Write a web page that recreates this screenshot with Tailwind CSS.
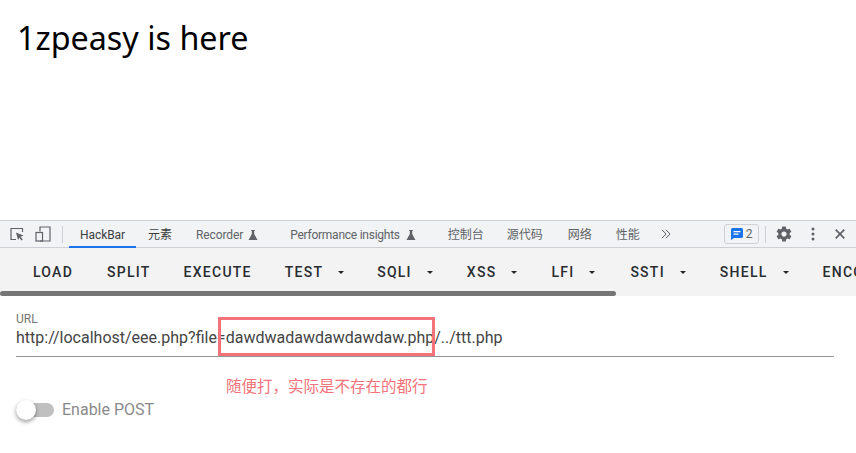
<!DOCTYPE html>
<html>
<head>
<meta charset="utf-8">
<script src="https://cdn.jsdelivr.net/npm/@tailwindcss/browser@4"></script>
</head>
<body class="w-[856px] h-[453px] overflow-hidden bg-white relative font-['Roboto','Noto_Sans_CJK_SC',sans-serif]">
<div class="h-[220px] pl-[17px] pt-[13px] text-[32.3px] leading-[48px] text-black font-['Noto_Sans','Noto_Sans_CJK_SC',sans-serif]">1zpeasy is here</div>

<div class="h-[28px] flex items-center bg-[#f1f3f4] border-y border-[#cdd0d4] text-[12px] text-[#5f6368] whitespace-nowrap">
  <svg class="ml-[9px] w-[16px] h-[16px]" viewBox="0 0 16 16" fill="none"><path d="M7 13.500H2V2.500h11.500V6" stroke="#5f6368" stroke-width="1.200"/><path d="M7 6.500l7.500 3-3 1.200 2.300 2.800-1.300 1-2.200-2.800L9 14z" fill="#5f6368"/></svg>
  <svg class="ml-[10px] w-[16px] h-[16px]" viewBox="0 0 16 16" fill="none"><path d="M5 5.500V1h10v14H5" stroke="#5f6368" stroke-width="1.200"/><rect x="1" y="6.500" width="6.500" height="8.500" stroke="#5f6368" stroke-width="1.200"/></svg>
  <div class="ml-[11px] w-px h-[17px] bg-[#cdd0d4]"></div>
  <div class="ml-[6px] h-[26px] w-[67px] pt-px flex items-center justify-center text-[#3c4043] tracking-[-0.1px] relative">HackBar<div class="absolute left-0 right-0 bottom-[-1px] h-[2px] bg-[#1a73e8]"></div></div>
  <div class="ml-[12px] w-[24px] pt-px text-[#3c4043]">元素</div>
  <div class="ml-[24px] pt-px flex items-center tracking-[-0.1px]">Recorder<svg class="ml-[5px] w-[10px] h-[10px]" viewBox="0 0 10 10"><path d="M3.200 0h3.600v1H6.200v3L9.500 10H.5L3.800 4V1H3.200z" fill="#5f6368"/></svg></div>
  <div class="ml-[32px] pt-px flex items-center tracking-[-0.25px]">Performance insights<svg class="ml-[6px] w-[10px] h-[10px]" viewBox="0 0 10 10"><path d="M3.200 0h3.600v1H6.200v3L9.500 10H.5L3.800 4V1H3.200z" fill="#5f6368"/></svg></div>
  <div class="ml-[32px] pt-px">控制台</div>
  <div class="ml-[23px] pt-px">源代码</div>
  <div class="ml-[25px] pt-px">网络</div>
  <div class="ml-[24px] pt-px">性能</div>
  <svg class="ml-[21px] w-[10px] h-[10px]" viewBox="0 0 10 10" fill="none" stroke="#5f6368" stroke-width="1"><path d="M1 .8L5 5 1 9.200M5 .8L9 5 5 9.200"/></svg>
  <div class="ml-[53px] w-[35px] h-[20px] rounded-[3px] border border-[#cdd0d4] flex items-center pl-[6px]">
    <svg class="w-[12px] h-[12px]" viewBox="0 0 12 12"><path d="M1.500 0h9A1.500 1.500 0 0 1 12 1.500v7A1.500 1.500 0 0 1 10.500 10H3l-3 2V1.500A1.500 1.500 0 0 1 1.500 0z" fill="#1a73e8"/><path d="M2.500 3h7v1.200h-7zM2.500 5.600h5v1.200h-5z" fill="#fff"/></svg>
    <span class="ml-[3px]">2</span>
  </div>
  <div class="ml-[6px] w-px h-[17px] bg-[#cdd0d4]"></div>
  <svg class="ml-[9px] w-[18px] h-[18px]" viewBox="0 0 24 24"><path fill="#5f6368" d="M19.430 12.980c.04-.32.070-.64.070-.98s-.03-.66-.07-.98l2.110-1.650c.19-.15.240-.42.120-.64l-2-3.460c-.12-.22-.39-.3-.61-.22l-2.490 1c-.52-.4-1.080-.73-1.690-.98l-.38-2.650C14.460 2.180 14.250 2 14 2h-4c-.25 0-.46.180-.49.420l-.38 2.650c-.61.250-1.170.590-1.690.980l-2.490-1c-.23-.09-.49 0-.61.220l-2 3.460c-.13.220-.07.490.12.640l2.110 1.650c-.04.320-.07.650-.07.980s.03.660.07.980l-2.110 1.650c-.19.150-.24.420-.12.640l2 3.460c.12.220.39.300.61.220l2.490-1c.52.400 1.080.730 1.690.980l.38 2.650c.03.240.24.420.49.420h4c.25 0 .46-.18.49-.42l.38-2.650c.61-.25 1.170-.59 1.690-.98l2.490 1c.23.090.49 0 .61-.22l2-3.460c.12-.22.070-.49-.12-.64l-2.110-1.650zM12 15.500c-1.930 0-3.500-1.570-3.500-3.500s1.570-3.500 3.500-3.500 3.500 1.570 3.500 3.500-1.570 3.500-3.500 3.500z"/></svg>
  <svg class="ml-[18px] w-[4px] h-[14px]" viewBox="0 0 4 14"><circle cx="2" cy="2" r="1.500" fill="#5f6368"/><circle cx="2" cy="7" r="1.500" fill="#5f6368"/><circle cx="2" cy="12" r="1.500" fill="#5f6368"/></svg>
  <svg class="ml-[20px] w-[10px] h-[10px]" viewBox="0 0 10 10"><path d="M.7.7l8.600 8.600M9.300.7L.7 9.300" stroke="#5f6368" stroke-width="1.700"/></svg>
</div>

<div class="h-[48px] bg-[#f3f3f4] relative overflow-hidden">
  <div class="h-[48px] pl-[16px] flex items-center text-[14px] font-medium tracking-[1.25px] text-[#2a2d30] whitespace-nowrap">
    <div class="pl-[17px] pr-[17px]">LOAD</div>
    <div class="pl-[17px] pr-[16px]">SPLIT</div>
    <div class="pl-[17px] pr-[16px]">EXECUTE</div>
    <div class="pl-[17px] pr-[17px] flex items-center">TEST<span class="ml-[15px] w-0 h-0 border-x-[3px] border-x-transparent border-t-[3px] border-t-[#212529]"></span></div>
    <div class="w-px h-[32px] bg-[#dcdcdc]"></div>
    <div class="pl-[16px] pr-[17px] flex items-center">SQLI<span class="ml-[15px] w-0 h-0 border-x-[3px] border-x-transparent border-t-[3px] border-t-[#212529]"></span></div>
    <div class="pl-[17px] pr-[17px] flex items-center">XSS<span class="ml-[15px] w-0 h-0 border-x-[3px] border-x-transparent border-t-[3px] border-t-[#212529]"></span></div>
    <div class="pl-[17px] pr-[18px] flex items-center">LFI<span class="ml-[15px] w-0 h-0 border-x-[3px] border-x-transparent border-t-[3px] border-t-[#212529]"></span></div>
    <div class="pl-[17px] pr-[17px] flex items-center">SSTI<span class="ml-[15px] w-0 h-0 border-x-[3px] border-x-transparent border-t-[3px] border-t-[#212529]"></span></div>
    <div class="pl-[17px] pr-[17px] flex items-center">SHELL<span class="ml-[15px] w-0 h-0 border-x-[3px] border-x-transparent border-t-[3px] border-t-[#212529]"></span></div>
    <div class="pl-[17px]">ENCODING</div>
  </div>
  <div class="absolute left-0 bottom-0 w-[616px] h-[5px] rounded-full bg-[#767676]"></div>
</div>

<div class="pl-[16px] pr-[22px] pt-[16px]">
  <div class="text-[12px] leading-[14px] text-[#757575]">URL</div>
  <div class="h-[31px] border-b border-[#949494] text-[16px] leading-[24px] text-[#444444] whitespace-nowrap">http://localhost/eee.php?file=dawdwadawdawdawdaw.php/../ttt.php</div>
</div>
<div class="mt-[17px] pl-[226px] text-[15.500px] leading-[22px] text-[#f4737a] font-['Noto_Sans_CJK_SC',sans-serif]">随便打，实际是不存在的都行</div>
<div class="mt-[2px] pl-[16px] flex items-center h-[24px]">
  <div class="relative w-[38px] h-[14px] rounded-full bg-[#c0c0c0]">
    <div class="absolute left-0 top-[-3px] w-[20px] h-[20px] rounded-full bg-white shadow-[0_2px_4px_rgba(0,0,0,0.4)]"></div>
  </div>
  <div class="ml-[8px] text-[16px] text-[#8a8a8a]">Enable POST</div>
</div>

<div class="absolute left-[218px] top-[317px] w-[217px] h-[39px] border-[3px] border-[#f4737a]"></div>
</body>
</html>
